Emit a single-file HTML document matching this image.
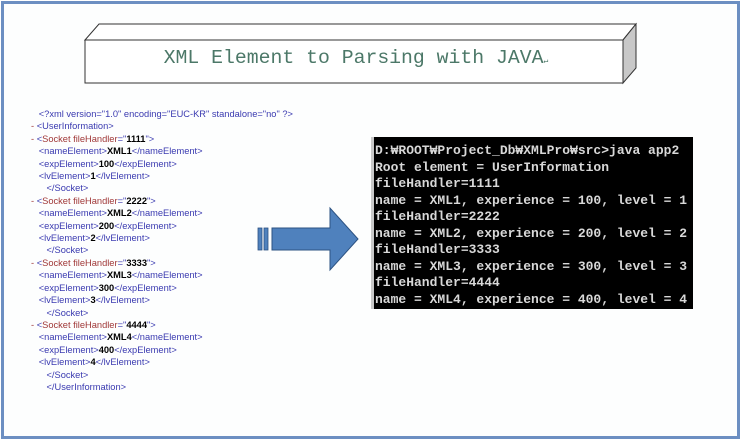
<!DOCTYPE html>
<html><head><style>
body{margin:0;width:740px;height:440px;background:#fff;position:relative;overflow:hidden;font-family:"Liberation Sans",sans-serif}
.frame{position:absolute;left:1px;top:1px;width:733px;height:432px;border:3px solid #6c8fc2;background:#fdfefe}
.xml{position:absolute;left:31px;top:108px;font-size:9.3px;line-height:12.4px;color:#3a3ab0;white-space:pre}
.xml .a{color:#a03838}.xml b{color:#000}.xml .d{color:#a03838}
.con{position:absolute;left:371px;top:137px;width:322px;height:172px;background:#000;border-left:3px solid #c8c8c8;box-sizing:border-box;overflow:hidden}
.con pre{margin:0;position:absolute;left:1px;top:6px;font-family:"Liberation Mono",monospace;font-weight:bold;font-size:13px;line-height:16.5px;color:#d8d8d8}
</style></head><body>
<div class="frame"></div>
<svg style="position:absolute;left:0;top:0" width="740" height="440">
<polygon points="85,40 99,24 636,24 623,40" fill="#fff" stroke="#333" stroke-width="1"/>
<polygon points="623,40 636,24 636,68 623,83" fill="#c8c8c8" stroke="#333" stroke-width="1"/>
<rect x="85" y="40" width="538" height="43" fill="#fff" stroke="#333" stroke-width="1"/>
<text x="356" y="63" text-anchor="middle" font-family="Liberation Mono,monospace" font-size="19.8" fill="#4c7868">XML Element to Parsing with JAVA<tspan font-size="8">↵</tspan></text>
<rect x="258" y="228" width="4" height="22" fill="#4f81bd" stroke="#2c5282" stroke-width="0.8"/>
<rect x="264" y="228" width="4" height="22" fill="#4f81bd" stroke="#2c5282" stroke-width="0.8"/>
<polygon points="272,228 330,228 330,208 358,239 330,270 330,250 272,250" fill="#4f81bd" stroke="#2c5282" stroke-width="1"/>
</svg>
<div class="xml">   &lt;?xml version="1.0" encoding="EUC-KR" standalone="no" ?&gt;
<span class="d">-</span> &lt;UserInformation&gt;
<span class="d">-</span> &lt;<span class="a">Socket fileHandler</span>="<b>1111</b>"&gt;
   &lt;nameElement&gt;<b>XML1</b>&lt;/nameElement&gt;
   &lt;expElement&gt;<b>100</b>&lt;/expElement&gt;
   &lt;lvElement&gt;<b>1</b>&lt;/lvElement&gt;
      &lt;/Socket&gt;
<span class="d">-</span> &lt;<span class="a">Socket fileHandler</span>="<b>2222</b>"&gt;
   &lt;nameElement&gt;<b>XML2</b>&lt;/nameElement&gt;
   &lt;expElement&gt;<b>200</b>&lt;/expElement&gt;
   &lt;lvElement&gt;<b>2</b>&lt;/lvElement&gt;
      &lt;/Socket&gt;
<span class="d">-</span> &lt;<span class="a">Socket fileHandler</span>="<b>3333</b>"&gt;
   &lt;nameElement&gt;<b>XML3</b>&lt;/nameElement&gt;
   &lt;expElement&gt;<b>300</b>&lt;/expElement&gt;
   &lt;lvElement&gt;<b>3</b>&lt;/lvElement&gt;
      &lt;/Socket&gt;
<span class="d">-</span> &lt;<span class="a">Socket fileHandler</span>="<b>4444</b>"&gt;
   &lt;nameElement&gt;<b>XML4</b>&lt;/nameElement&gt;
   &lt;expElement&gt;<b>400</b>&lt;/expElement&gt;
   &lt;lvElement&gt;<b>4</b>&lt;/lvElement&gt;
      &lt;/Socket&gt;
      &lt;/UserInformation&gt;</div>
<div class="con"><pre>D:₩ROOT₩Project_Db₩XMLPro₩src&gt;java app2
Root element = UserInformation
fileHandler=1111
name = XML1, experience = 100, level = 1
fileHandler=2222
name = XML2, experience = 200, level = 2
fileHandler=3333
name = XML3, experience = 300, level = 3
fileHandler=4444
name = XML4, experience = 400, level = 4</pre></div>
</body></html>
